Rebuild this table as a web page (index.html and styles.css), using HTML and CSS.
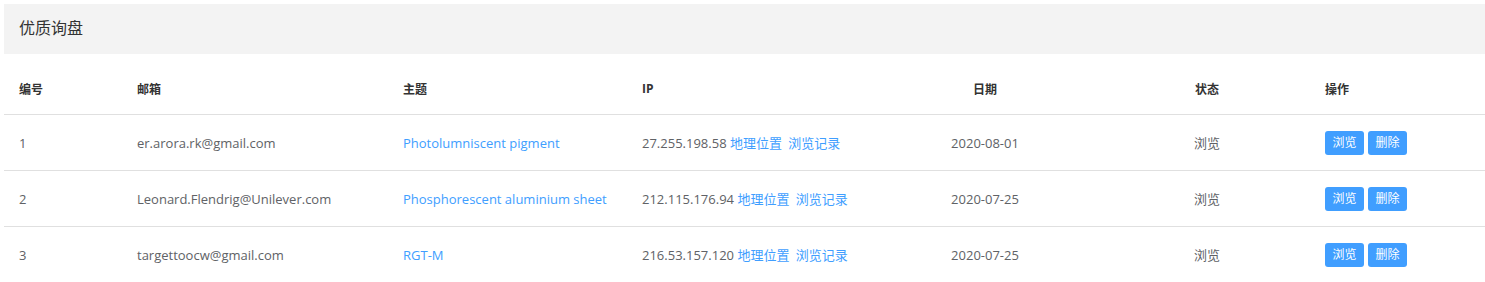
FILE: index.html
```html
<!DOCTYPE html>
<html lang="zh">
<head>
<meta charset="utf-8">
<title>优质询盘</title>
<link rel="stylesheet" href="styles.css">
</head>
<body>
<div class="card">
  <div class="card-header"><span class="title">优质询盘</span></div>
  <table class="grid">
    <colgroup>
      <col class="c-id"><col class="c-mail"><col class="c-subj"><col class="c-ip"><col class="c-date"><col class="c-state"><col class="c-op">
    </colgroup>
    <thead>
      <tr>
        <th>编号</th><th>邮箱</th><th>主题</th><th>IP</th><th class="center">日期</th><th class="center">状态</th><th>操作</th>
      </tr>
    </thead>
    <tbody>
      <tr>
        <td>1</td>
        <td>er.arora.rk@gmail.com</td>
        <td><a class="link">Photolumniscent pigment</a></td>
        <td>27.255.198.58 <a class="link">地理位置</a> <a class="link gap">浏览记录</a></td>
        <td class="center">2020-08-01</td>
        <td class="center">浏览</td>
        <td><span class="btn">浏览</span><span class="btn">删除</span></td>
      </tr>
      <tr>
        <td>2</td>
        <td>Leonard.Flendrig@Unilever.com</td>
        <td><a class="link">Phosphorescent aluminium sheet</a></td>
        <td>212.115.176.94 <a class="link">地理位置</a> <a class="link gap">浏览记录</a></td>
        <td class="center">2020-07-25</td>
        <td class="center">浏览</td>
        <td><span class="btn">浏览</span><span class="btn">删除</span></td>
      </tr>
      <tr>
        <td>3</td>
        <td>targettoocw@gmail.com</td>
        <td><a class="link">RGT-M</a></td>
        <td>216.53.157.120 <a class="link">地理位置</a> <a class="link gap">浏览记录</a></td>
        <td class="center">2020-07-25</td>
        <td class="center">浏览</td>
        <td><span class="btn">浏览</span><span class="btn">删除</span></td>
      </tr>
    </tbody>
  </table>
</div>
</body>
</html>
```
FILE: styles.css
```css
html, body {
  margin: 0;
  padding: 0;
  background: #fff;
}
body {
  padding: 4px 0 0 4px;
  font-family: "Open Sans", "Noto Sans CJK SC", sans-serif;
  color: #606266;
}
.card-header {
  height: 50px;
  background: #f3f3f3;
  display: flex;
  align-items: center;
  padding-left: 15px;
  font-size: 16px;
  color: #333;
}
.title {
  line-height: 20px;
  padding-bottom: 3px;
}
.grid {
  width: 100%;
  border-collapse: collapse;
  table-layout: fixed;
  margin-top: 9px;
  font-size: 13px;
}
.c-id { width: 118px; }
.c-mail { width: 266px; }
.c-subj { width: 239px; }
.c-ip { width: 239px; }
.c-date { width: 238px; }
.c-state { width: 206px; }
.c-op { width: auto; }
.grid th {
  height: 51px;
  padding: 0 15px;
  text-align: left;
  font-size: 12px;
  font-weight: bold;
  color: #333;
  border-bottom: 1px solid #e0e0e0;
  vertical-align: middle;
}
.grid td {
  height: 55px;
  padding: 0 15px;
  text-align: left;
  border-bottom: 1px solid #e0e0e0;
  vertical-align: middle;
  white-space: nowrap;
}
.grid tbody tr:last-child td {
  border-bottom: none;
}
.grid .center {
  text-align: center;
}
.link {
  color: #409eff;
  text-decoration: none;
}
.link.gap {
  margin-left: 3px;
}
.btn {
  display: inline-block;
  width: 39px;
  height: 24px;
  line-height: 24px;
  margin-right: 4px;
  background: #409eff;
  color: #fff;
  font-size: 12px;
  text-align: center;
  border-radius: 3px;
  vertical-align: middle;
}
```
